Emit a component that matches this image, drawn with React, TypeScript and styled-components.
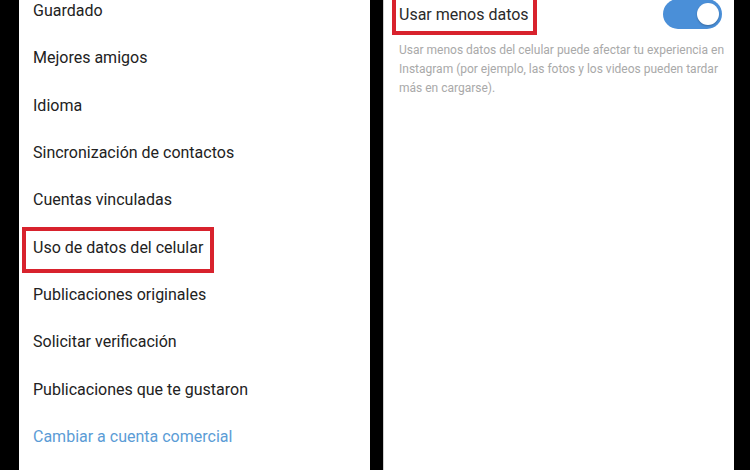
import React, { useState } from 'react';
import styled, { createGlobalStyle } from 'styled-components';

const GlobalStyle = createGlobalStyle`
  html, body {
    margin: 0;
    padding: 0;
    background: #000;
  }
  body {
    font-family: Roboto, "Noto Sans", "Liberation Sans", sans-serif;
  }
`;

// Contenedor general
const Screen = styled.div`
  width: 750px;
  height: 470px;
  display: flex;
  gap: 13px;
  padding-left: 19px;
  box-sizing: border-box;
  background: #000;
  overflow: hidden;
`;

const Panel = styled.div<{ $edge?: boolean }>`
  width: 351px;
  height: 470px;
  background: #fff;
  overflow: hidden;
  box-sizing: border-box;
  border-left: ${p => (p.$edge ? '1px solid #cfcfcf' : 'none')};
`;

const MenuList = styled.div`
  display: flex;
  flex-direction: column;
  margin-top: -13px;
`;

const MenuItem = styled.div<{ $link?: boolean }>`
  position: relative;
  height: 47.33px;
  display: flex;
  align-items: center;
  padding-left: 14px;
  font-size: 16px;
  color: ${p => (p.$link ? '#5b9cd6' : '#222')};
`;

// Recuadro rojo de resaltado
const Highlight = styled.span`
  position: absolute;
  left: 3px;
  top: 3.5px;
  width: 192px;
  height: 46px;
  border: 4.5px solid #d8222d;
  box-sizing: border-box;
`;

const SettingRow = styled.div`
  position: relative;
  height: 48px;
  margin-top: -10px;
  display: flex;
  align-items: center;
  justify-content: space-between;
  padding: 0 12px 0 15px;
`;

const SettingLabel = styled.span`
  font-size: 16px;
  color: #2a2a2a;
`;

const LabelHighlight = styled.span`
  position: absolute;
  left: 8px;
  top: 0;
  width: 145px;
  height: 45px;
  border: 4.5px solid #d8222d;
  box-sizing: border-box;
`;

const Toggle = styled.button<{ $on: boolean }>`
  position: relative;
  width: 59px;
  height: 30px;
  border: none;
  border-radius: 15px;
  padding: 0;
  background: ${p => (p.$on ? '#4a8fd8' : '#cfcfcf')};
  cursor: pointer;

  &::after {
    content: '';
    position: absolute;
    top: 4px;
    left: ${p => (p.$on ? '34px' : '4px')};
    width: 22px;
    height: 22px;
    border-radius: 50%;
    background: #fff;
    box-shadow: 0 1px 2px rgba(0, 0, 0, 0.25);
  }
`;

const Description = styled.p`
  margin: 3px 0 0;
  padding: 0 10px 0 15px;
  font-size: 12px;
  line-height: 19px;
  color: #a9a9a9;
`;

const items = [
  'Guardado',
  'Mejores amigos',
  'Idioma',
  'Sincronización de contactos',
  'Cuentas vinculadas',
  'Uso de datos del celular',
  'Publicaciones originales',
  'Solicitar verificación',
  'Publicaciones que te gustaron',
];

const App: React.FC = () => {
  const [menosDatos, setMenosDatos] = useState(true);

  return (
    <>
      <GlobalStyle />
      <Screen>
        <Panel>
          <MenuList>
            {items.map(item => (
              <MenuItem key={item}>
                {item === 'Uso de datos del celular' && <Highlight />}
                {item}
              </MenuItem>
            ))}
            <MenuItem $link>Cambiar a cuenta comercial</MenuItem>
          </MenuList>
        </Panel>

        <Panel $edge>
          <SettingRow>
            <LabelHighlight />
            <SettingLabel>Usar menos datos</SettingLabel>
            <Toggle $on={menosDatos} onClick={() => setMenosDatos(!menosDatos)} />
          </SettingRow>
          <Description>
            Usar menos datos del celular puede afectar tu experiencia en Instagram (por ejemplo, las
            fotos y los videos pueden tardar más en cargarse).
          </Description>
        </Panel>
      </Screen>
    </>
  );
};

export default App;
